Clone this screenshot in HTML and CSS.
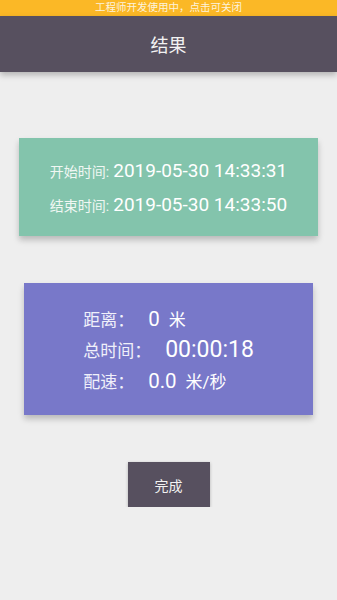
FILE: index.html
```html
<!DOCTYPE html>
<html lang="zh-CN">
<head>
    <meta charset="UTF-8">
    <meta name="viewport" content="width=device-width, initial-scale=1.0">
    <title>结果</title>
    <link rel="stylesheet" href="styles.css">
</head>
<body>
    <div class="dev-bar">工程师开发使用中，点击可关闭</div>
    <div class="header">结果</div>
    <div class="time-card">
        <div class="time-row"><span class="time-label">开始时间:</span> <span class="time-value">2019-05-30 14:33:31</span></div>
        <div class="time-row"><span class="time-label">结束时间:</span> <span class="time-value">2019-05-30 14:33:50</span></div>
    </div>
    <div class="stats-card">
        <div class="stats-list">
            <div class="stats-row"><span class="stats-label">距离：</span><span class="stats-value">0</span><span class="stats-unit">米</span></div>
            <div class="stats-row"><span class="stats-label">总时间：</span><span class="stats-value big">00:00:18</span></div>
            <div class="stats-row"><span class="stats-label">配速：</span><span class="stats-value">0.0</span><span class="stats-unit">米/秒</span></div>
        </div>
    </div>
    <div class="done-wrap">
        <button class="done-button">完成</button>
    </div>
</body>
</html>
```

FILE: styles.css
```css
body {
    margin: 0;
    background-color: #eeeeee;
    font-family: Roboto, "Noto Sans CJK SC", sans-serif;
    color: #ffffff;
}
.dev-bar {
    height: 16px;
    line-height: 16px;
    background-color: #fbb826;
    font-size: 10.5px;
    text-align: center;
    color: #fdf3dc;
}
.header {
    height: 56px;
    line-height: 60px;
    background-color: #57505f;
    font-size: 18px;
    text-align: center;
    color: #f2f2f2;
    box-shadow: 0 3px 6px rgba(0, 0, 0, 0.25);
    position: relative;
}
.time-card {
    margin: 66px 19px 0;
    padding: 17px 0 13px;
    background-color: #83c4ac;
    text-align: center;
    box-shadow: 0 4px 6px rgba(0, 0, 0, 0.22);
}
.time-row {
    height: 34px;
    line-height: 34px;
    white-space: nowrap;
}
.time-row span {
    line-height: 1;
}
.time-label {
    font-size: 14px;
    color: #f0f7f3;
}
.time-value {
    font-size: 19px;
}
.stats-card {
    margin: 47px 24px 0;
    padding: 22px 0 17px;
    background-color: #7878c9;
    text-align: center;
    box-shadow: 0 4px 6px rgba(0, 0, 0, 0.22);
}
.stats-list {
    display: inline-block;
    text-align: left;
}
.stats-row {
    height: 31px;
    line-height: 31px;
    white-space: nowrap;
}
.stats-row span {
    line-height: 1;
}
.stats-label {
    font-size: 17px;
    color: #f0f0fa;
}
.stats-value {
    margin-left: 14px;
    font-size: 20.5px;
}
.stats-value.big {
    font-size: 23px;
}
.stats-unit {
    margin-left: 9px;
    font-size: 17px;
}
.done-wrap {
    margin-top: 47px;
    text-align: center;
}
.done-button {
    width: 82px;
    height: 45px;
    border: none;
    background-color: #57505f;
    color: #f2f2f2;
    font-family: Roboto, "Noto Sans CJK SC", sans-serif;
    font-size: 14px;
    box-shadow: 0 1px 3px rgba(0, 0, 0, 0.25);
    padding: 0;
}
```
